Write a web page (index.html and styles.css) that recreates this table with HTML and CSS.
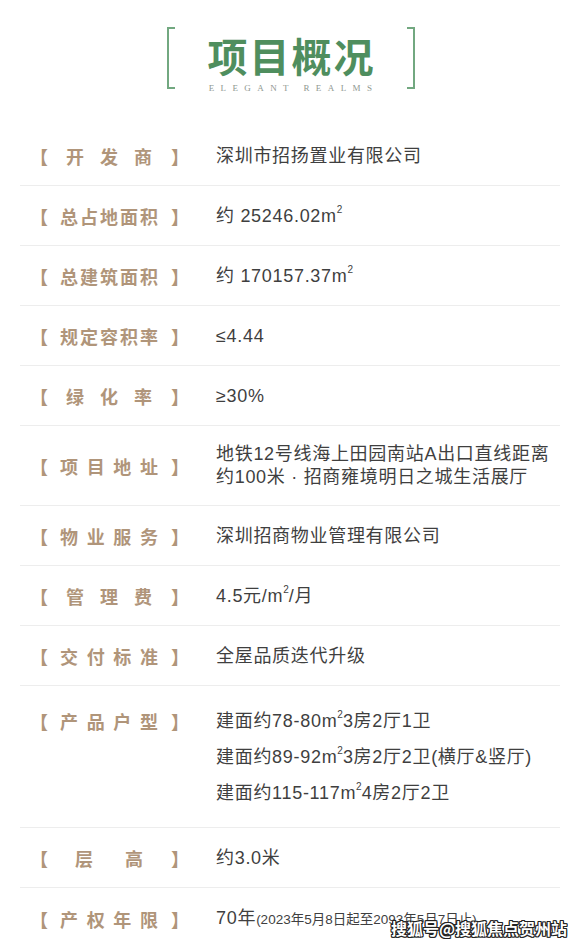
FILE: index.html
```html
<!DOCTYPE html>
<html lang="zh-CN">
<head>
<meta charset="utf-8">
<title>项目概况</title>
<link rel="stylesheet" href="styles.css">
</head>
<body>
<div class="page">
  <header class="head">
    <div class="brk brk-l"></div>
    <div class="head-text">
      <h1 class="title">项目概况</h1>
      <div class="sub">ELEGANT REALMS</div>
    </div>
    <div class="brk brk-r"></div>
  </header>

  <div class="list">
    <div class="row">
      <div class="key"><span class="b">【</span><span class="lbl n3">开发商</span><span class="b">】</span></div>
      <div class="val">深圳市招扬置业有限公司</div>
    </div>
    <div class="row">
      <div class="key"><span class="b">【</span><span class="lbl">总占地面积</span><span class="b">】</span></div>
      <div class="val">约 25246.02m<span class="sq">2</span></div>
    </div>
    <div class="row">
      <div class="key"><span class="b">【</span><span class="lbl">总建筑面积</span><span class="b">】</span></div>
      <div class="val">约 170157.37m<span class="sq">2</span></div>
    </div>
    <div class="row">
      <div class="key"><span class="b">【</span><span class="lbl">规定容积率</span><span class="b">】</span></div>
      <div class="val">≤4.44</div>
    </div>
    <div class="row">
      <div class="key"><span class="b">【</span><span class="lbl n3">绿化率</span><span class="b">】</span></div>
      <div class="val">≥30%</div>
    </div>
    <div class="row addr">
      <div class="key"><span class="b">【</span><span class="lbl">项目地址</span><span class="b">】</span></div>
      <div class="val">地铁12号线海上田园南站A出口直线距离<br>约100米 · 招商雍境明日之城生活展厅</div>
    </div>
    <div class="row">
      <div class="key"><span class="b">【</span><span class="lbl">物业服务</span><span class="b">】</span></div>
      <div class="val">深圳招商物业管理有限公司</div>
    </div>
    <div class="row">
      <div class="key"><span class="b">【</span><span class="lbl n3">管理费</span><span class="b">】</span></div>
      <div class="val">4.5元/m<span class="sq">2</span>/月</div>
    </div>
    <div class="row">
      <div class="key"><span class="b">【</span><span class="lbl">交付标准</span><span class="b">】</span></div>
      <div class="val">全屋品质迭代升级</div>
    </div>
    <div class="row top">
      <div class="key"><span class="b">【</span><span class="lbl">产品户型</span><span class="b">】</span></div>
      <div class="val">建面约78-80m<span class="sq">2</span>3房2厅1卫<br>建面约89-92m<span class="sq">2</span>3房2厅2卫(横厅&amp;竖厅)<br>建面约115-117m<span class="sq">2</span>4房2厅2卫</div>
    </div>
    <div class="row">
      <div class="key"><span class="b">【</span><span class="lbl n2">层高</span><span class="b">】</span></div>
      <div class="val">约3.0米</div>
    </div>
    <div class="row">
      <div class="key"><span class="b">【</span><span class="lbl">产权年限</span><span class="b">】</span></div>
      <div class="val">70年<span class="small">(2023年5月8日起至2093年5月7日止)</span></div>
    </div>
  </div>

  <div class="wm">搜狐号@搜狐焦点贺州站</div>
</div>
</body>
</html>
```
FILE: styles.css
```css
* { box-sizing: border-box; }
html, body { margin: 0; padding: 0; background: #fff; }
body {
  font-family: "Liberation Sans", "Noto Sans CJK SC", sans-serif;
}
.page {
  position: relative;
  width: 581px;
  height: 945px;
  overflow: hidden;
}

/* header */
.head {
  display: flex;
  justify-content: center;
  align-items: flex-start;
  padding-top: 27px;
  height: 126px;
}
.brk {
  width: 8px;
  height: 62px;
  border: 2px solid #72a880;
}
.brk-l { border-right: none; }
.brk-r { border-left: none; }
.head-text {
  width: 232px;
  text-align: center;
}
.title {
  margin: 6px 0 0;
  padding-left: 2px;
  font-family: "Noto Sans CJK SC", sans-serif;
  font-weight: 700;
  font-size: 40px;
  line-height: 44px;
  letter-spacing: 2px;
  color: #4f8e5e;
}
.sub {
  margin-top: 6px;
  padding-left: 6px;
  font-family: "Liberation Serif", serif;
  font-size: 9px;
  line-height: 10px;
  letter-spacing: 6.4px;
  color: #8f9891;
}

/* list */
.list {
  margin: 0 21px 0 20px;
}
.row {
  display: flex;
  align-items: center;
  padding: 17px 0 16px;
  border-bottom: 1px solid #ededed;
}
.row:last-child { border-bottom: none; }
.key {
  flex: 0 0 196px;
  display: flex;
  align-items: center;
  padding-left: 10px;
  font-family: "Noto Sans CJK SC", sans-serif;
  font-weight: 700;
  font-size: 18px;
  line-height: 26px;
  color: #b0957a;
}
.b {
  display: inline-block;
  width: 18px;
}
.lbl {
  display: inline-block;
  width: 98px;
  margin: 0 13px 0 12px;
  text-align: justify;
  text-align-last: justify;
}
.lbl.n3 { padding: 0 6px; }
.lbl.n2 { padding: 0 15px; }
.val {
  flex: 1;
  font-size: 18px;
  line-height: 26px;
  letter-spacing: 0.7px;
  color: #3f3f3f;
}
.sq {
  font-size: 10px;
  line-height: 0;
  vertical-align: 9px;
  letter-spacing: 0;
}
.addr .val { line-height: 23px; }
.top { align-items: flex-start; }
.top .key, .top .val { line-height: 36px; }
.small {
  font-size: 13.5px;
  letter-spacing: 0;
}

/* watermark */
.wm {
  position: absolute;
  right: 14px;
  bottom: 8px;
  font-family: "Noto Sans CJK SC", sans-serif;
  font-weight: 700;
  font-size: 16px;
  line-height: 18px;
  color: #fff;
  text-shadow: -1px 0 0 #222, 1px 0 0 #222, 0 -1px 0 #222, 0 1px 0 #222,
               -1px -1px 0 #222, 1px 1px 0 #222, -1px 1px 0 #222, 1px -1px 0 #222;
}
```
